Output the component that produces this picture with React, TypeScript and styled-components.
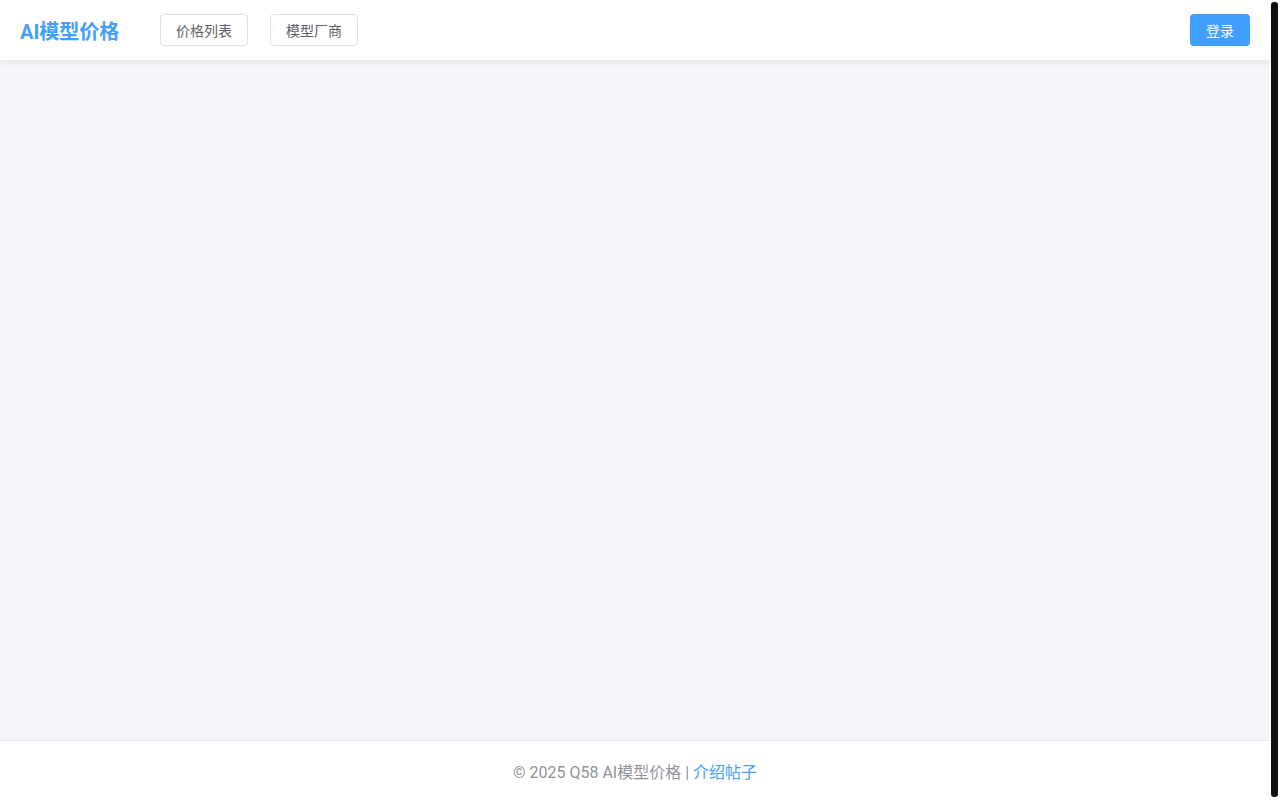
import React from "react";
import styled, { createGlobalStyle } from "styled-components";

const GlobalStyle = createGlobalStyle`
  html, body {
    margin: 0;
    padding: 0;
    overflow: hidden;
  }
  body {
    font-family: Roboto, "Noto Sans CJK SC", "Noto Sans", sans-serif;
    background: #ffffff;
    color: #303133;
  }
`;

const Shell = styled.div`
  display: flex;
  height: 100vh;
`;

const Page = styled.div`
  flex: 1;
  display: flex;
  flex-direction: column;
  min-width: 0;
`;

// dark scrollbar seen at the right edge of the window
const ScrollRail = styled.div`
  width: 10px;
  flex-shrink: 0;
  background: #ffffff;
  padding: 2px 2px 3px 1px;
  box-sizing: border-box;
  display: flex;
`;

const ScrollThumb = styled.div`
  flex: 1;
  background: #111111;
  border-radius: 3px;
`;

const Header = styled.header`
  height: 60px;
  flex-shrink: 0;
  display: flex;
  align-items: center;
  padding: 0 20px;
  background: #ffffff;
  box-shadow: 0 2px 8px rgba(0, 0, 0, 0.08);
  position: relative;
  z-index: 1;
`;

const Logo = styled.div`
  font-size: 20px;
  font-weight: 700;
  color: #409eff;
  width: 100px;
  margin-right: 40px;
  white-space: nowrap;
`;

const Nav = styled.nav`
  display: flex;
  gap: 22px;
  flex: 1;
`;

const NavButton = styled.button`
  height: 32px;
  width: 88px;
  padding: 0 0 1px;
  border: 1px solid #dcdfe6;
  border-radius: 4px;
  background: #ffffff;
  color: #606266;
  font-family: inherit;
  font-size: 14px;
  cursor: pointer;
`;

const LoginButton = styled.button`
  height: 32px;
  width: 60px;
  padding: 0 0 1px;
  border: none;
  border-radius: 4px;
  background: #409eff;
  color: #ffffff;
  font-family: inherit;
  font-size: 14px;
  cursor: pointer;
`;

const Main = styled.main`
  flex: 1;
  background: #f5f6fa;
`;

const Footer = styled.footer`
  box-sizing: border-box;
  height: 60px;
  flex-shrink: 0;
  display: flex;
  align-items: center;
  justify-content: center;
  padding-top: 1px;
  background: #ffffff;
  border-top: 1px solid #e4e7ed;
  font-size: 16px;
  color: #909399;
`;

const FooterLink = styled.a`
  color: #409eff;
  text-decoration: none;
  margin-left: 4px;
`;

export default function App() {
  return (
    <>
      <GlobalStyle />
      <Shell>
        <Page>
          <Header>
            <Logo>AI模型价格</Logo>
            <Nav>
              <NavButton>价格列表</NavButton>
              <NavButton>模型厂商</NavButton>
            </Nav>
            <LoginButton>登录</LoginButton>
          </Header>
          <Main />
          <Footer>
            © 2025 Q58 AI模型价格 |<FooterLink href="#">介绍帖子</FooterLink>
          </Footer>
        </Page>
        <ScrollRail>
          <ScrollThumb />
        </ScrollRail>
      </Shell>
    </>
  );
}
